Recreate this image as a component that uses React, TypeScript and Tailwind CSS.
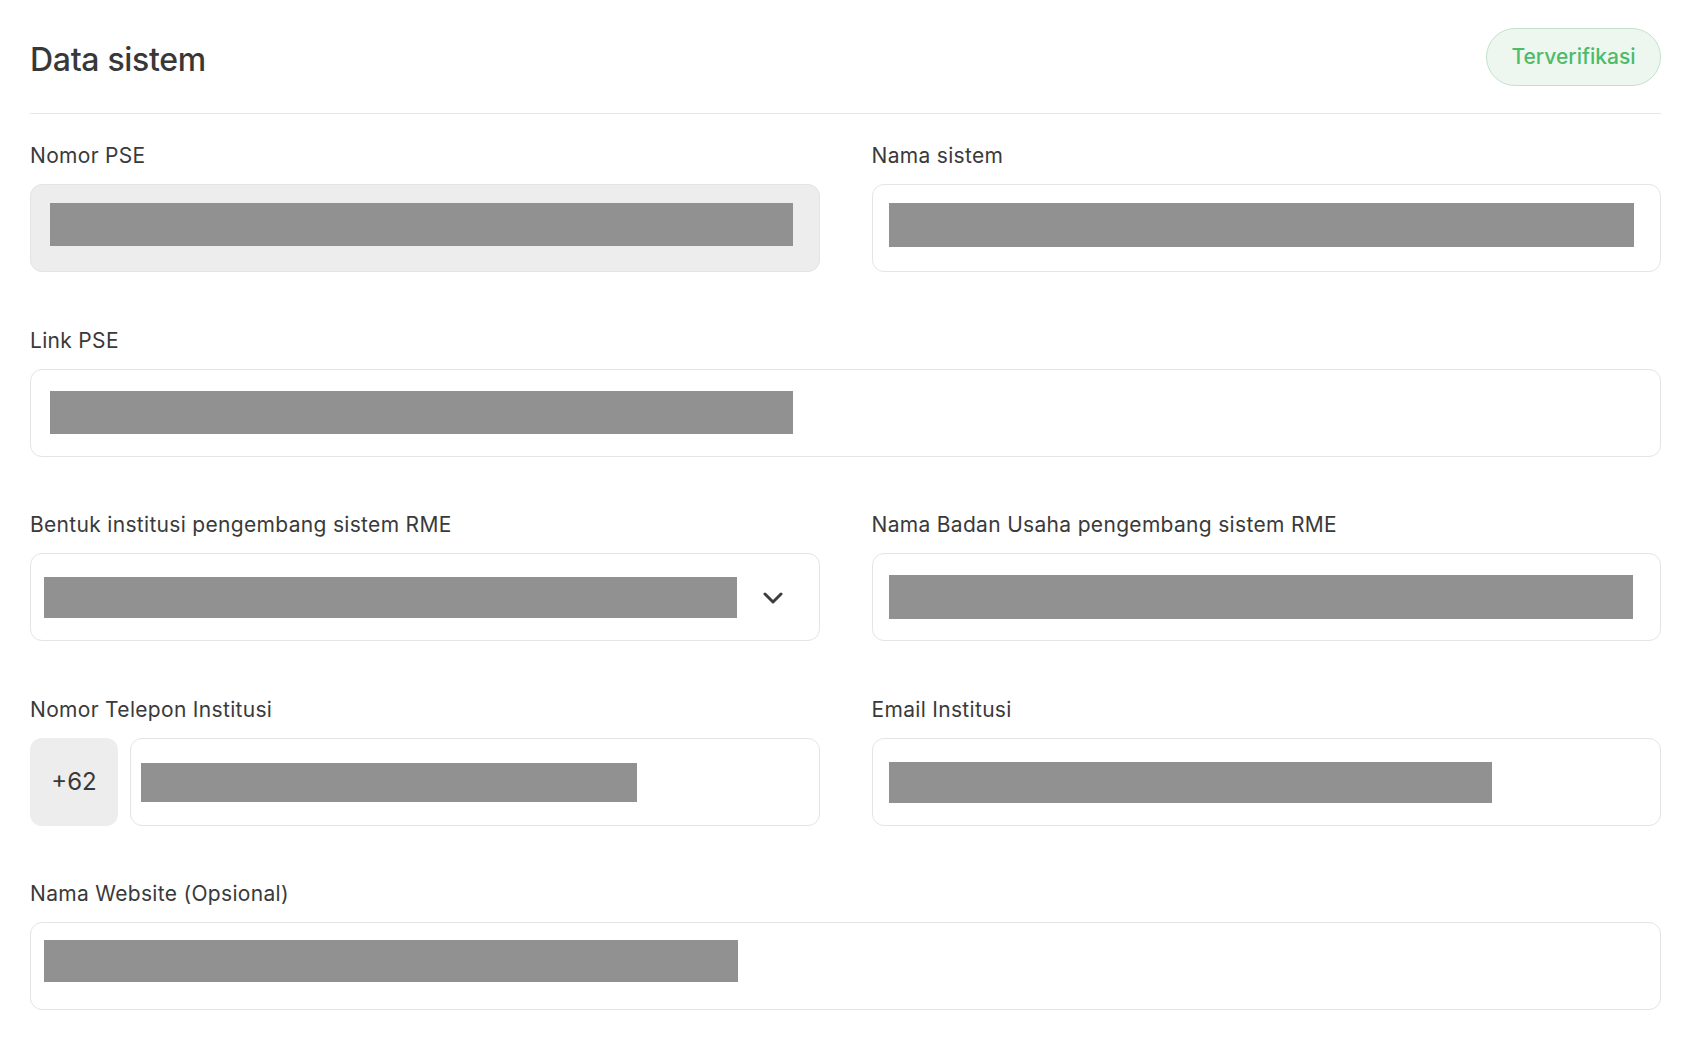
const Bar = ({ className }: { className: string }) => (
  <div className={`bg-[#919191] shrink-0 ${className}`} />
);

const Label = ({ children }: { children: React.ReactNode }) => (
  <label className="block text-[21px] leading-[28px] text-[#3a3a3a] tracking-[0.015em]">
    {children}
  </label>
);

export default function App() {
  return (
    <div className="min-h-screen bg-white pl-[30px] pr-[27px] font-['Inter','Liberation_Sans',sans-serif]">
      {/* header */}
      <div className="flex items-center justify-between pt-[28px] pb-[27px] border-b border-[#e6e6e6]">
        <h1 className="mt-[6px] text-[32px] leading-[40px] font-medium text-[#383838] tracking-[-0.01em]">
          Data sistem
        </h1>
        <span className="flex items-center justify-center w-[175px] h-[58px] rounded-full bg-[#eef7ef] border border-[#c3e2cb] text-[21px] font-medium text-[#4cbb6a]">
          Terverifikasi
        </span>
      </div>

      {/* form */}
      <div className="grid grid-cols-2 gap-x-[52px] gap-y-[54.5px] mt-[28px]">
        <div>
          <Label>Nomor PSE</Label>
          <div className="mt-[14px] h-[88px] flex items-start pl-[19px] rounded-[12px] border border-[#e4e4e4] bg-[#ededed]">
            <Bar className="mt-[18px] w-[743px] h-[43px]" />
          </div>
        </div>
        <div>
          <Label>Nama sistem</Label>
          <div className="mt-[14px] h-[88px] flex items-start pl-[16px] rounded-[12px] border border-[#e4e4e4]">
            <Bar className="mt-[18px] w-[745px] h-[44px]" />
          </div>
        </div>

        <div className="col-span-2">
          <Label>Link PSE</Label>
          <div className="mt-[14px] h-[88px] flex items-start pl-[19px] rounded-[12px] border border-[#e4e4e4]">
            <Bar className="mt-[21px] w-[743px] h-[43px]" />
          </div>
        </div>

        <div>
          <Label>Bentuk institusi pengembang sistem RME</Label>
          <div className="mt-[14px] h-[88px] flex items-start pl-[13px] pr-[36px] rounded-[12px] border border-[#e4e4e4]">
            <Bar className="mt-[23px] w-[693px] h-[41px]" />
            <svg
              className="ml-auto self-center mt-[1px]"
              width="20"
              height="12"
              viewBox="0 0 20 12"
              fill="none"
            >
              <path
                d="M2 2L10 10L18 2"
                stroke="#3d3d3d"
                strokeWidth="3"
                strokeLinecap="round"
                strokeLinejoin="round"
              />
            </svg>
          </div>
        </div>
        <div>
          <Label>Nama Badan Usaha pengembang sistem RME</Label>
          <div className="mt-[14px] h-[88px] flex items-start pl-[16px] rounded-[12px] border border-[#e4e4e4]">
            <Bar className="mt-[21px] w-[744px] h-[44px]" />
          </div>
        </div>

        <div>
          <Label>Nomor Telepon Institusi</Label>
          <div className="mt-[14px] flex gap-[12px]">
            <div className="w-[88px] h-[88px] shrink-0 flex items-center justify-center rounded-[12px] bg-[#ededed] text-[24px] text-[#383838]">
              +62
            </div>
            <div className="flex-1 h-[88px] flex items-start pl-[10px] rounded-[12px] border border-[#e4e4e4]">
              <Bar className="mt-[24px] w-[496px] h-[39px]" />
            </div>
          </div>
        </div>
        <div>
          <Label>Email Institusi</Label>
          <div className="mt-[14px] h-[88px] flex items-start pl-[16px] rounded-[12px] border border-[#e4e4e4]">
            <Bar className="mt-[23px] w-[603px] h-[41px]" />
          </div>
        </div>

        <div className="col-span-2">
          <Label>Nama Website (Opsional)</Label>
          <div className="mt-[14px] h-[88px] flex items-start pl-[13px] rounded-[12px] border border-[#e4e4e4]">
            <Bar className="mt-[17px] w-[694px] h-[42px]" />
          </div>
        </div>
      </div>
    </div>
  );
}
